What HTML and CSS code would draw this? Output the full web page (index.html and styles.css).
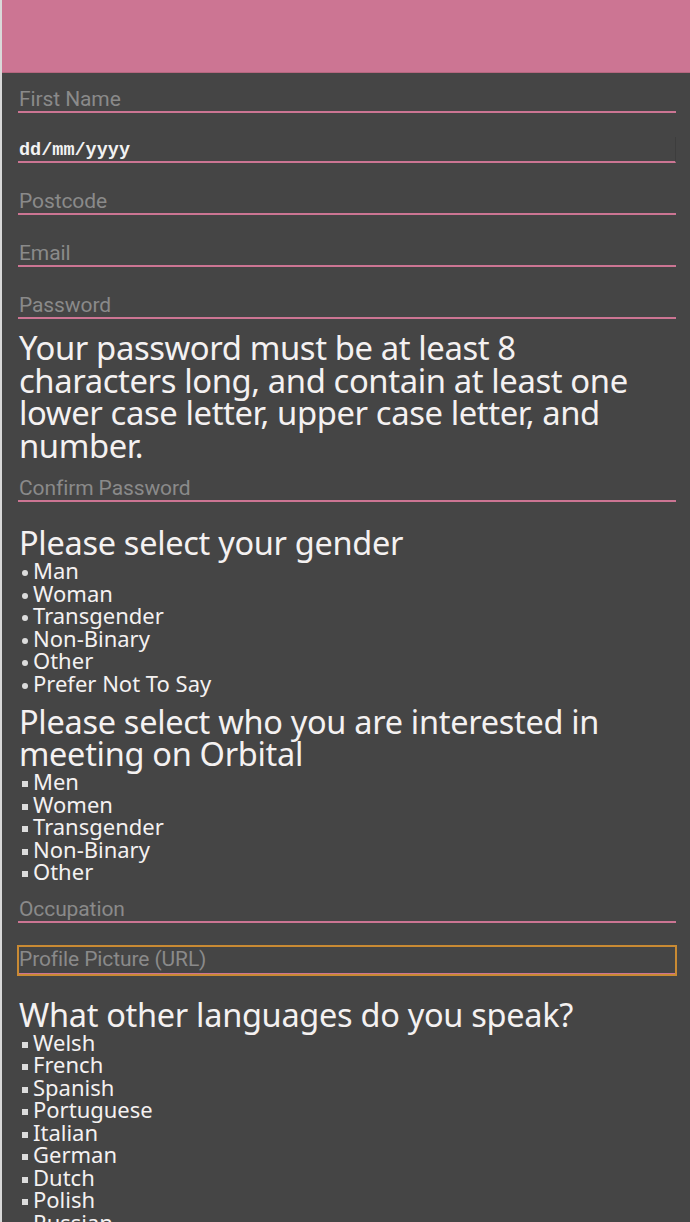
FILE: index.html
```html
<!DOCTYPE html>
<html>
<head>
<meta charset="utf-8">
<link rel="stylesheet" href="styles.css">
</head>
<body>
<div class="page">
  <header class="topbar"></header>
  <form class="form">
    <input class="field first" type="text" placeholder="First Name">
    <input class="field date" type="text" value="dd/mm/yyyy">
    <input class="field" type="text" placeholder="Postcode">
    <input class="field" type="text" placeholder="Email">
    <input class="field" type="password" placeholder="Password">
    <p class="hint">Your password must be at least 8 characters long, and contain at least one lower case letter, upper case letter, and number.</p>
    <input class="field confirm" type="password" placeholder="Confirm Password">
    <h2 class="question">Please select your gender</h2>
    <ul class="options disc">
      <li>Man</li>
      <li>Woman</li>
      <li>Transgender</li>
      <li>Non-Binary</li>
      <li>Other</li>
      <li>Prefer Not To Say</li>
    </ul>
    <h2 class="question after-list">Please select who you are interested in meeting on Orbital</h2>
    <ul class="options square">
      <li>Men</li>
      <li>Women</li>
      <li>Transgender</li>
      <li>Non-Binary</li>
      <li>Other</li>
    </ul>
    <input class="field occupation" type="text" placeholder="Occupation">
    <input class="field focused" type="text" placeholder="Profile Picture (URL)">
    <h2 class="question lang">What other languages do you speak?</h2>
    <ul class="options square">
      <li>Welsh</li>
      <li>French</li>
      <li>Spanish</li>
      <li>Portuguese</li>
      <li>Italian</li>
      <li>German</li>
      <li>Dutch</li>
      <li>Polish</li>
      <li>Russian</li>
    </ul>
  </form>
</div>
</body>
</html>
```

FILE: styles.css
```css
html, body {
  margin: 0;
  padding: 0;
  background: #454545;
}
.page {
  border-left: 2px solid #d9d9d9;
  min-height: 1222px;
  background: #454545;
}
.topbar {
  height: 72px;
  background: #cc7593;
  border-bottom: 1px solid #b5677f;
}
.form {
  display: flex;
  flex-direction: column;
  padding: 0 14px 0 16px;
  color: #f4f1f1;
  font-family: "Noto Sans", "Open Sans", sans-serif;
}
.field {
  box-sizing: border-box;
  height: 26px;
  margin: 14px 0 0 0;
  padding: 0 0 0 1px;
  background: transparent;
  border: none;
  border-bottom: 2px solid #cc7593;
  outline: none;
  font-family: Roboto, "Liberation Sans", sans-serif;
  font-size: 21px;
  letter-spacing: -0.1px;
  color: #8a8a8a;
}
.field::placeholder {
  color: #8a8a8a;
}
.field + .field {
  margin-top: 26px;
}
.field.date {
  margin-top: 24px;
  font-family: "Liberation Mono", "Courier New", monospace;
  font-weight: bold;
  font-size: 18.5px;
  letter-spacing: 0;
  color: #f2f2f2;
  padding-top: 3px;
  border-right: 1px solid #3d3d3d;
}
.hint {
  margin: 13px 0 0 1px;
  font-size: 32.8px;
  line-height: 32.5px;
  letter-spacing: -0.4px;
}
.field.confirm {
  margin-top: 14px;
}
.question {
  margin: 25px 0 0 1px;
  font-weight: normal;
  font-size: 32.5px;
  line-height: 32px;
  letter-spacing: -0.3px;
}
.question.after-list {
  margin-top: 12px;
}
.options {
  list-style: none;
  margin: 0;
  padding: 0 0 0 4px;
  font-size: 22px;
  line-height: 22.5px;
}
.options li {
  display: flex;
  align-items: center;
  gap: 5px;
}
.options li::before {
  content: "";
  display: block;
  flex: none;
  width: 6px;
  height: 6px;
  margin-top: 6px;
  background: #dcdcdc;
}
.disc li::before {
  border-radius: 50%;
}
.field.occupation {
  margin-top: 14px;
}
.field.focused {
  height: 29px;
  margin-top: 23px;
  outline: 2px solid #c98a33;
  outline-offset: -1px;
  border-bottom: 2px solid #cc7593;
}
.question.lang {
  margin-top: 24px;
}
```
